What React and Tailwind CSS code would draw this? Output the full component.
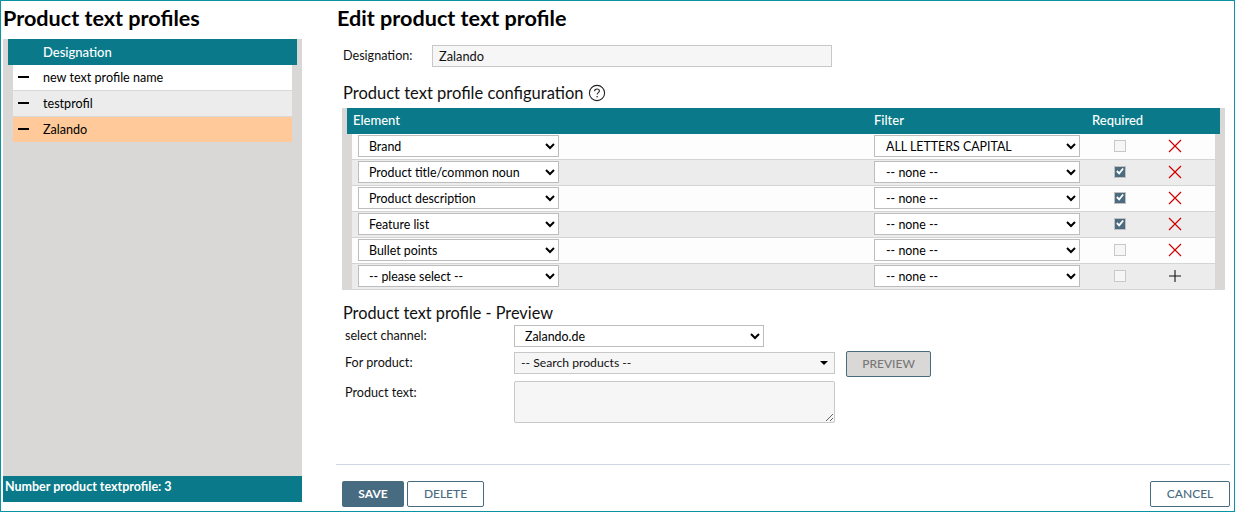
import { useState } from 'react';

const rows = [
  { element: 'Brand', filter: 'ALL LETTERS CAPITAL', required: false },
  { element: 'Product title/common noun', filter: '-- none --', required: true },
  { element: 'Product description', filter: '-- none --', required: true },
  { element: 'Feature list', filter: '-- none --', required: true },
  { element: 'Bullet points', filter: '-- none --', required: false },
  { element: '-- please select --', filter: '-- none --', required: false, add: true },
];

const profiles = [
  { name: 'new text profile name', cls: 'bg-white' },
  { name: 'testprofil', cls: 'bg-[#ececec]' },
  { name: 'Zalando', cls: 'bg-[#ffc999]' },
];

function NativeSelect({ value, className }) {
  return (
    <select
      defaultValue={value}
      className={`h-[22px] border border-[#bdbdbd] bg-white text-[12.4px] text-black outline-none ${className}`}
    >
      <option>{value}</option>
    </select>
  );
}

function Check({ checked }) {
  if (!checked) {
    return <span className="block h-3 w-3 border border-[#c8c8c8] bg-[#f6f6f6]"></span>;
  }
  return (
    <span className="flex h-3 w-3 items-center justify-center border border-[#c0c0c0] bg-[#4a6b80]">
      <svg viewBox="0 0 12 12" className="h-3 w-3">
        <path d="M2.2 4.8L5 7.6L9.8 1.8" fill="none" stroke="#fff" strokeWidth="2.2" />
      </svg>
    </span>
  );
}

function Cross() {
  return (
    <svg viewBox="0 0 14 14" className="h-[14px] w-[14px]">
      <path d="M1 1L13 13M13 1L1 13" stroke="#cc0000" strokeWidth="1.2" fill="none" />
    </svg>
  );
}

function Plus() {
  return (
    <svg viewBox="0 0 14 14" className="h-[14px] w-[14px]">
      <path d="M7 1V13M1 7H13" stroke="#111" strokeWidth="1.1" fill="none" />
    </svg>
  );
}

export default function App() {
  const [name] = useState('Zalando');

  return (
    <div className="flex h-[512px] w-[1235px] overflow-hidden border border-[#0a93a3] bg-white pb-[1px] pl-[2px] pr-[4px] text-[12.6px] text-[#111] [font-family:Lato,'Liberation_Sans',sans-serif]">
      {/* Left list */}
      <div className="flex w-[299px] flex-col">
        <h1 className="h-[38px] pt-[3px] text-[21.6px] font-bold leading-[28px] text-black">Product text profiles</h1>
        <div className="flex flex-1 flex-col bg-[#d9d8d6] px-[5px]">
          <div className="h-[26px] bg-[#0a7a8a] pl-[35px] text-[13px] font-medium leading-[26px] text-white">Designation</div>
          <div className="px-[5px]">
            {profiles.map((p) => (
              <div key={p.name} className={`mb-[1px] flex h-[25px] items-center ${p.cls}`}>
                <span className="ml-[5px] block h-[2px] w-[11px] -translate-y-[1px] bg-black"></span>
                <span className="ml-[14px] pt-[1px] text-black">{p.name}</span>
              </div>
            ))}
          </div>
        </div>
        <div className="h-[26px] bg-[#0a7a8a] pl-[2px] text-[12.5px] font-bold leading-[22px] text-white">Number product textprofile: 3</div>
        <div className="h-[8px]"></div>
      </div>

      {/* Edit form */}
      <div className="ml-[34px] flex flex-1 flex-col">
        <h1 className="h-[44px] pl-[1px] pt-[3px] text-[21.6px] font-bold leading-[28px] text-black">Edit product text profile</h1>
        <div className="flex h-[22px] items-center pl-[7px]">
          <span className="w-[89px]">Designation:</span>
          <input
            readOnly
            value={name}
            className="h-[22px] w-[400px] border border-[#c8c8c8] bg-[#f6f6f6] pl-[6px] text-[12.8px] outline-none"
          />
        </div>

        <div className="mt-[15px] flex h-[26px] items-center gap-[4px] pb-[4px] pl-[7px] text-[16.5px] leading-[20px]">
          <span>Product text profile configuration</span>
          <svg viewBox="0 0 18 18" className="h-[18px] w-[18px]">
            <circle cx="9" cy="9" r="7.6" fill="none" stroke="#222" strokeWidth="1.1" />
            <path d="M6.6 7.2C6.6 5.8 7.7 5 9 5C10.4 5 11.4 5.9 11.4 7C11.4 8.6 9.1 8.7 9.1 10.6" fill="none" stroke="#222" strokeWidth="1.1" />
            <circle cx="9.1" cy="12.7" r="0.8" fill="#222" />
          </svg>
        </div>

        <div className="ml-[6px] mr-[5px] bg-[#d9d8d6] px-[5px]">
          <div className="flex h-[26px] items-center bg-[#0a7a8a] text-[13px] font-medium text-white">
            <span className="w-[527px] pl-[6px]">Element</span>
            <span className="w-[218px]">Filter</span>
            <span>Required</span>
          </div>
          <div className="mx-[5px]">
            {rows.map((r, i) => (
              <div
                key={i}
                className={`flex h-[26px] items-start border-b border-[#d4d4d4] pl-[6px] ${i % 2 === 0 ? 'bg-[#fdfdfd]' : 'bg-[#ececec]'}`}
              >
                <NativeSelect value={r.element} className="mt-[1px] w-[201px] pl-[6px]" />
                <div className="w-[315px]"></div>
                <NativeSelect value={r.filter} className="mt-[1px] w-[206px] pl-[7px]" />
                <div className="ml-[34px] mt-[6px]"><Check checked={r.required} /></div>
                <div className="ml-[42px] mt-[5px]">{r.add ? <Plus /> : <Cross />}</div>
              </div>
            ))}
          </div>
        </div>

        <h2 className="mt-[12px] h-[23px] pl-[7px] text-[16.3px] font-normal leading-[22px]">Product text profile - Preview</h2>
        <div className="flex h-[22px] items-center pl-[9px]">
          <span className="w-[169px] pt-[1px]">select channel:</span>
          <NativeSelect value="Zalando.de" className="w-[250px] pl-[6px]" />
        </div>
        <div className="mt-[4px] flex h-[26px] items-start pl-[9px]">
          <span className="w-[169px] pt-[3px]">For product:</span>
          <div className="mt-[1px] flex h-[22px] w-[321px] items-center justify-between border border-[#c8c8c8] bg-[#f6f6f6] px-[6px] text-[12.2px]">
            <span>-- Search products --</span>
            <span className="h-0 w-0 border-x-[4px] border-t-[4px] border-x-transparent border-t-black"></span>
          </div>
          <button className="ml-[11px] h-[26px] w-[85px] rounded-[2px] border border-[#476b80] bg-[#d9d8d6] text-[12px] font-medium text-[#777]">PREVIEW</button>
        </div>
        <div className="mt-[4px] flex items-start pl-[9px]">
          <span className="w-[169px] pt-[3px]">Product text:</span>
          <textarea readOnly className="h-[42px] w-[321px] rounded-[2px] border border-[#c8c8c8] bg-[#f6f6f6] outline-none"></textarea>
        </div>

        <div className="mt-auto border-t border-[#ccd6e0]"></div>
        <div className="mb-[3px] mt-[16px] flex h-[26px] items-stretch pl-[6px] text-[12px]">
          <button className="w-[62px] rounded-[2px] bg-[#476b80] font-bold text-white">SAVE</button>
          <button className="ml-[3px] w-[77px] rounded-[2px] border border-[#476b80] bg-white font-medium text-[#476b80]">DELETE</button>
          <button className="ml-auto w-[80px] rounded-[2px] border border-[#476b80] bg-white font-medium text-[#476b80]">CANCEL</button>
        </div>
      </div>
    </div>
  );
}
